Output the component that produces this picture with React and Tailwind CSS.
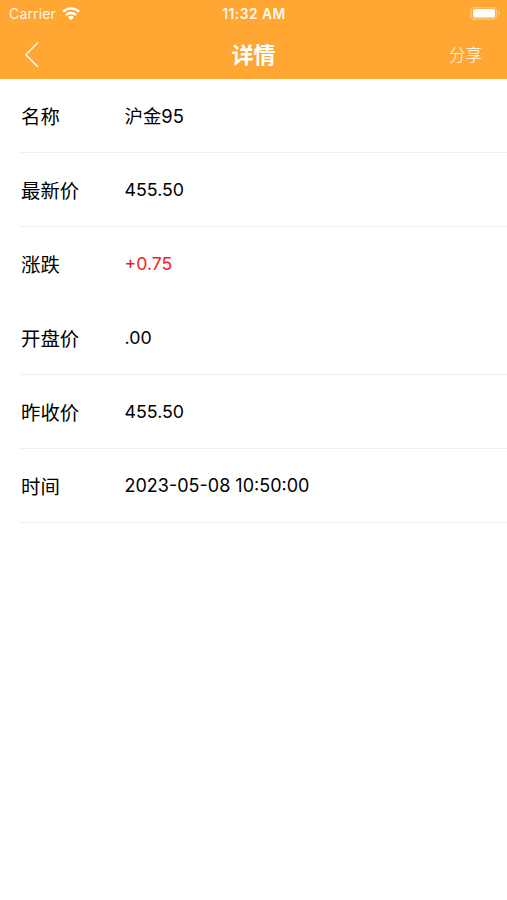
const rows = [
  { label: '名称', value: '沪金95', valueClass: 'pt-[3px] text-[18.4px]' },
  { label: '最新价', value: '455.50' },
  { label: '涨跌', value: '+0.75', valueClass: 'pt-px text-[17.7px] text-[#f51d1d]', line: 'border-[#fcfcfc]' },
  { label: '开盘价', value: '.00' },
  { label: '昨收价', value: '455.50' },
  { label: '时间', value: '2023-05-08 10:50:00', valueClass: 'text-[18px]' },
];

function WifiIcon() {
  return (
    <svg className="h-[14px] w-[18px]" viewBox="0 0 18 14" fill="none" stroke="currentColor" strokeWidth="2.4">
      <path d="M1 4.6a11.5 11.5 0 0 1 16 0" />
      <path d="M4 8a7.2 7.2 0 0 1 10 0" />
      <path d="M9 13.3l-3-3a4.3 4.3 0 0 1 6 0z" fill="currentColor" stroke="none" />
    </svg>
  );
}

function BatteryIcon() {
  return (
    <svg className="h-[14px] w-[31px]" viewBox="0 0 31 14">
      <rect x="1" y="0.5" width="25.5" height="11.5" rx="3.5" fill="none" stroke="#fff" strokeOpacity="0.35" strokeWidth="1.6" />
      <rect x="3" y="2" width="22" height="8.5" rx="1.8" fill="#fff" />
      <path d="M28.3 4v4.5c2-.6 2-3.9 0-4.5z" fill="#fff" fillOpacity="0.4" />
    </svg>
  );
}

function StatusBar() {
  return (
    <div className="grid h-[27px] grid-cols-3 items-center pl-[9px] pr-[6px] text-[14px]">
      <div className="flex items-center gap-[6px]">
        <span className="tracking-[0.15px] text-white/90">Carrier</span>
        <WifiIcon />
      </div>
      <span className="whitespace-nowrap pr-[2px] pt-px text-center text-[13.8px] font-semibold tracking-[0.5px] text-white/95">
        11:32 AM
      </span>
      <div className="flex justify-end">
        <BatteryIcon />
      </div>
    </div>
  );
}

export default function App() {
  return (
    <div className="min-h-screen bg-white font-[Inter,'Noto_Sans_CJK_SC',sans-serif] text-black">
      <header className="h-[79px] bg-[#ffa633] text-white">
        <StatusBar />
        <nav className="grid h-[52px] grid-cols-3 items-center pl-[24px] pr-[25px] pt-[3px]">
          <svg className="h-[26px] w-[15px] text-white/90" viewBox="0 0 15 26" fill="none" stroke="currentColor" strokeWidth="1.5">
            <path d="M14 0.5L1.8 12.7L14 24.9" />
          </svg>
          <h1 className="pl-px pt-[2px] text-center text-[22px] font-bold">详情</h1>
          <span className="pt-[2px] text-right text-[16.5px] font-light">分享</span>
        </nav>
      </header>
      <ul>
        {rows.map((row) => (
          <li
            key={row.label}
            className={`ml-[20px] flex h-[74px] items-center border-b pl-px ${row.line || 'border-[#efefef]'}`}
          >
            <span className="w-[103.5px] pt-[4px] text-[19.4px]">{row.label}</span>
            <span className={row.valueClass || 'pt-px text-[17.8px]'}>{row.value}</span>
          </li>
        ))}
      </ul>
    </div>
  );
}
